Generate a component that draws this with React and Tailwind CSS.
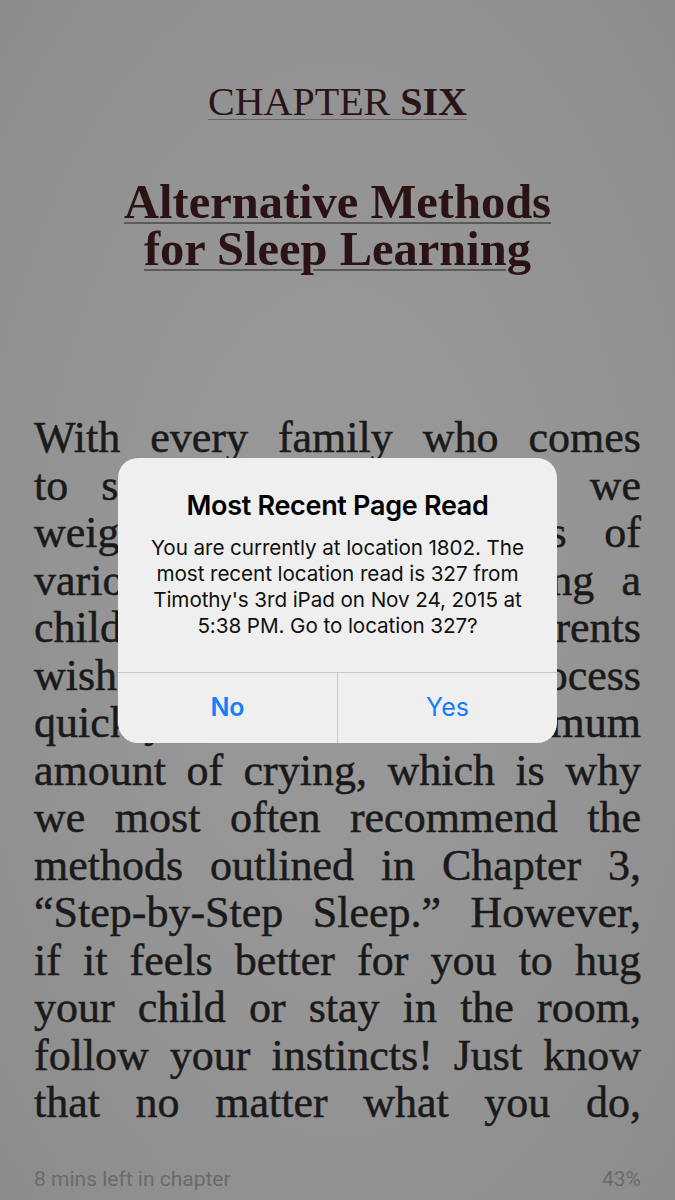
import React from "react";

const bodyLines = [
  "With every family who comes",
  "to see us for sleep help, we",
  "weigh the pros and cons of",
  "various methods for teaching a",
  "child to sleep. Many parents",
  "wish to get through the process",
  "quickly and with the minimum",
  "amount of crying, which is why",
  "we most often recommend the",
  "methods outlined in Chapter 3,",
  "\u201CStep-by-Step Sleep.\u201D However,",
  "if it feels better for you to hug",
  "your child or stay in the room,",
  "follow your instincts! Just know",
  "that no matter what you do,",
];

const serif = { fontFamily: '"Liberation Serif", serif' };

const JustifiedLine = ({ text }) => (
  <div className="flex justify-between whitespace-nowrap h-[47.5px]">
    {text.split(" ").map((word, i) => (
      <span key={i}>{word}</span>
    ))}
  </div>
);

const AlertDialog = () => (
  <div className="absolute left-[118px] top-[458px] w-[439px] h-[285px] rounded-[20px] bg-[#efefef] flex flex-col overflow-hidden font-['Inter',sans-serif]">
    <div className="flex-1 flex flex-col items-center px-4 pt-[33px]">
      <h2 className="text-[27px] leading-[30px] font-semibold text-black tracking-[-0.3px]">
        Most Recent Page Read
      </h2>
      <p className="mt-[14px] text-center text-[20.7px] leading-[26px] text-[#111] tracking-[-0.1px]">
        You are currently at location 1802. The
        <br />
        most recent location read is 327 from
        <br />
        Timothy's 3rd iPad on Nov 24, 2015 at
        <br />
        5:38 PM. Go to location 327?
      </p>
    </div>
    <div className="h-[71px] flex border-t border-[#c9c9c9]">
      <button
        type="button"
        className="flex-1 flex items-center justify-center text-[25px] font-semibold text-[#147efb]"
      >
        No
      </button>
      <div className="w-px bg-[#c9c9c9]" />
      <button
        type="button"
        className="flex-1 flex items-center justify-center text-[25px] text-[#147efb]"
      >
        Yes
      </button>
    </div>
  </div>
);

export default function App() {
  return (
    <div className="relative w-[675px] h-[1200px] overflow-hidden flex flex-col bg-[radial-gradient(ellipse_at_center,#9a9a9a_0%,#949494_55%,#8c8c8c_100%)]">
      <div className="px-[34px]" style={serif}>
        <div className="pt-[78px] text-center text-[40px] leading-[48px] text-[#2b1416] underline decoration-[#676767] decoration-1 underline-offset-[4px]">
          CHAPTER <span className="font-bold">SIX</span>
        </div>
        <h1 className="mt-[52px] text-center text-[48.5px] leading-[47px] font-bold text-[#2b1214] underline decoration-[#5a5a5a] decoration-[1.5px] underline-offset-[4px]">
          Alternative Methods
          <br />
          for Sleep Learning
        </h1>
        <div className="mt-[142px] text-[44px] leading-[47.5px] text-[#1a1a1a] [-webkit-text-stroke:0.5px_#1a1a1a]">
          {bodyLines.map((line, i) => (
            <JustifiedLine key={i} text={line} />
          ))}
        </div>
      </div>
      <div className="mt-auto h-[40px] px-[34px] flex items-center justify-between text-[21px] text-[#6a6a6a] font-['Roboto',sans-serif]">
        <span>8 mins left in chapter</span>
        <span>43%</span>
      </div>
      <AlertDialog />
    </div>
  );
}
